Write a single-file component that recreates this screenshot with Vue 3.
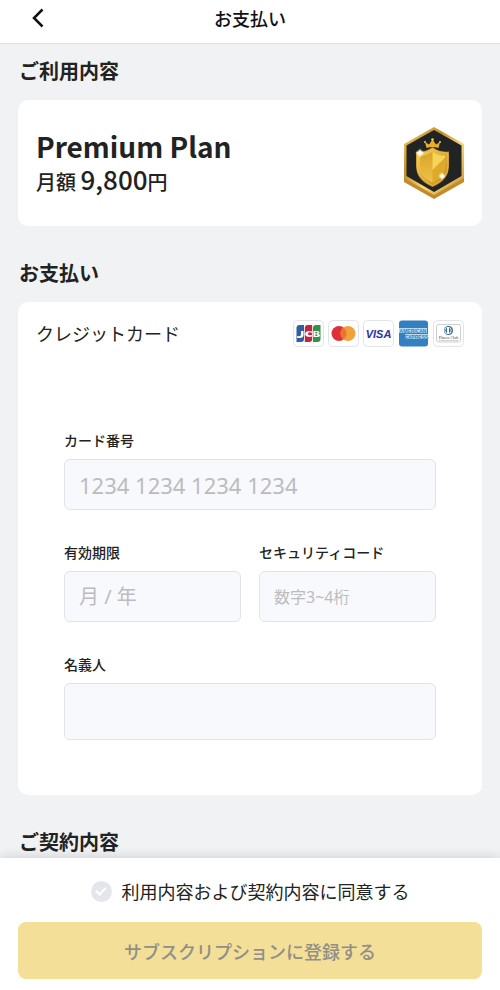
<script setup>
import {ref} from "vue";

const number = ref('')
const expiry = ref('')
const code = ref('')
const holder = ref('')
const agreed = ref(false)
</script>

<template>
    <div class="page">
        <header class="topbar">
            <button class="back" type="button" aria-label="戻る">
                <svg width="12" height="20" viewBox="0 0 12 20">
                    <path d="M10.5 1.5 2 10l8.500 8.500" fill="none" stroke="currentColor" stroke-width="2.500"/>
                </svg>
            </button>
            <h1>お支払い</h1>
        </header>

        <main class="content">
            <section>
                <h2>ご利用内容</h2>
                <div class="card plan">
                    <div>
                        <p class="plan-name">Premium Plan</p>
                        <p class="plan-price">月額 <span>9,800</span>円</p>
                    </div>
                    <svg class="badge" width="60" height="72" viewBox="0 0 60 72" aria-hidden="true">
                        <defs>
                            <linearGradient id="gold" x1="0" y1="0" x2="1" y2="1">
                                <stop offset="0" stop-color="#f0cf6a"/>
                                <stop offset=".35" stop-color="#c48d28"/>
                                <stop offset=".6" stop-color="#f3d77a"/>
                                <stop offset="1" stop-color="#c98f28"/>
                            </linearGradient>
                            <linearGradient id="shield" x1="0" y1="0" x2="1" y2="1">
                                <stop offset="0" stop-color="#f6d458"/>
                                <stop offset="1" stop-color="#c48a1e"/>
                            </linearGradient>
                            <linearGradient id="face" x1="0" y1="0" x2="0" y2="1">
                                <stop offset="0" stop-color="#d9a42d"/>
                                <stop offset="1" stop-color="#edc344"/>
                            </linearGradient>
                            <radialGradient id="spark">
                                <stop offset="0" stop-color="#fff"/>
                                <stop offset=".4" stop-color="#fff6cf"/>
                                <stop offset="1" stop-color="#fff6cf" stop-opacity="0"/>
                            </radialGradient>
                        </defs>
                        <path d="M0 49h60v6L30 72 0 55Z" fill="#c38a28"/>
                        <path d="M30 0 60 17v34L30 68 0 51V17Z" fill="url(#gold)"/>
                        <path d="M30 3 57.500 18.500v30.500L30 65 2.500 49V18.500Z" fill="#222323"/>
                        <path d="m22.500 21-1.500-6 4 2.500 3.500-5 3.500 5 4-2.500-1.500 6q-6-2-12 0Z" fill="#e6ae2d"/>
                        <g fill="#f5ce56">
                            <circle cx="21" cy="15" r="1"/>
                            <circle cx="28.500" cy="12.500" r="1.300"/>
                            <circle cx="36" cy="15" r="1"/>
                        </g>
                        <path d="M28.500 20q7 5.500 16.500 4.500V39q0 14-16.500 21Q12 53 12 39V24.500q9.500 1 16.500-4.500Z" fill="#c18a20"/>
                        <path d="M28.500 21.500q7 5 15.500 4.500v13q0 13-15.500 19.500Q13 52 13 39V26q8.500.5 15.500-4.500Z" fill="url(#shield)" stroke="#f0cb5c" stroke-width=".7"/>
                        <path d="M28.500 25q6 3.800 12.500 3.700V39q0 11-12.500 16.500Q16 50 16 39V28.700Q22.500 28.800 28.500 25Z" fill="url(#face)"/>
                        <path d="M28.500 25q6 3.800 12.500 3.700V31L28.500 43Z" fill="#f6d458"/>
                        <path d="M28.500 43 41 31v8q0 11-12.500 16.500Z" fill="#dfa92c"/>
                        <circle cx="16" cy="26" r="4" fill="url(#spark)"/>
                        <path d="m16 21 .7 4.300 4.300.7-4.300.7L16 31l-.7-4.300L11 26l4.300-.7Z" fill="#fff"/>
                        <circle cx="38" cy="49" r="3.500" fill="url(#spark)"/>
                        <path d="m38 45 .6 3.400L42 49l-3.400.6L38 53l-.6-3.400L34 49l3.400-.6Z" fill="#fff"/>
                    </svg>
                </div>
            </section>

            <section>
                <h2>お支払い</h2>
                <div class="card">
                    <div class="method">
                        <h3>クレジットカード</h3>
                        <div class="brands">
                            <svg viewBox="0 0 31 27" role="img" aria-label="JCB">
                                <rect class="frame" x=".5" y=".5" width="30" height="26" rx="4"/>
                                <path d="M3.500 8q0-3 3-3H11v14q0 3-3 3H3.500Z" fill="#2f609f"/>
                                <path d="M11.800 8q0-3 3-3h4.400v14q0 3-3 3h-4.400Z" fill="#c1273f"/>
                                <path d="M20 8q0-3 3-3h4.500v14q0 3-3 3H20Z" fill="#32924b"/>
                                <path d="M4 16q3 1 4-1v-4h2.500v4q0 3-4 3-2 0-2.500-.5ZM19 11.500q-5-1.500-6.500 1-1 3 1.500 4 2 .8 5 0v-1.500q-4 1-4-1.300t4-1ZM20.500 11h4q2 0 2 1.500 0 1.200-1.500 1.500 2 .2 2 1.600 0 1.400-2 1.400h-4.500Zm1.800 1v1.500h2V12Zm0 2.500V16h2v-1.500Z" fill="#fff"/>
                            </svg>
                            <svg viewBox="0 0 31 27" role="img" aria-label="Mastercard">
                                <rect class="frame" x=".5" y=".5" width="30" height="26" rx="4"/>
                                <circle cx="11" cy="13.500" r="7.500" fill="#dd3038"/>
                                <circle cx="20" cy="13.500" r="7.500" fill="#f0a03d"/>
                                <path d="M15.500 7.500a7.500 7.500 0 0 1 0 12 7.500 7.500 0 0 1 0-12Z" fill="#ed742f"/>
                            </svg>
                            <svg viewBox="0 0 31 27" role="img" aria-label="VISA">
                                <rect class="frame" x=".5" y=".5" width="30" height="26" rx="4"/>
                                <text class="visa" x="15.500" y="17.500">VISA</text>
                            </svg>
                            <svg viewBox="0 0 31 27" role="img" aria-label="American Express">
                                <rect x="1" y=".5" width="29" height="26" rx="3" fill="#3380c0"/>
                                <rect x="1" y="8" width="28" height="5" fill="#b9dbf2"/>
                                <rect x="7" y="14" width="23" height="5" fill="#b9dbf2"/>
                                <text class="amex" x="15" y="12.500">AMERICAN</text>
                                <text class="amex" x="18.500" y="18.500">EXPRESS</text>
                            </svg>
                            <svg viewBox="0 0 31 27" role="img" aria-label="Diners Club">
                                <rect class="frame" x=".5" y=".5" width="30" height="26" rx="4"/>
                                <rect x="3.500" y="4.500" width="24" height="17.500" rx="2" fill="#fff" stroke="#bfc3cc" stroke-width=".8"/>
                                <circle cx="15.500" cy="10.500" r="4.500" fill="#2d6793"/>
                                <circle cx="15" cy="10.500" r="3.500" fill="#fff"/>
                                <path d="M14 7.800a3 3 0 0 0 0 5.400ZM16 7.800a3 3 0 0 1 0 5.400Z" fill="#2d6793"/>
                                <text class="diners" x="15.500" y="19">Diners Club</text>
                                <path d="M6 20.500h19" stroke="#9aa2ae" stroke-width=".7" stroke-dasharray="1 .4"/>
                            </svg>
                        </div>
                    </div>

                    <form class="fields">
                        <div class="field wide">
                            <label for="number">カード番号</label>
                            <input id="number" v-model="number" class="large" type="text" inputmode="numeric" placeholder="1234 1234 1234 1234">
                        </div>
                        <div class="field">
                            <label for="expiry">有効期限</label>
                            <input id="expiry" v-model="expiry" class="medium" type="text" placeholder="月 / 年">
                        </div>
                        <div class="field">
                            <label for="code">セキュリティコード</label>
                            <input id="code" v-model="code" type="text" inputmode="numeric" placeholder="数字3~4桁">
                        </div>
                        <div class="field wide">
                            <label for="holder">名義人</label>
                            <input id="holder" v-model="holder" class="tall" type="text">
                        </div>
                    </form>
                </div>
            </section>

            <section>
                <h2>ご契約内容</h2>
            </section>
        </main>

        <footer class="bottom">
            <label class="agree">
                <input v-model="agreed" type="checkbox">
                <span>利用内容および契約内容に同意する</span>
            </label>
            <button class="submit" type="button" :disabled="!agreed">サブスクリプションに登録する</button>
        </footer>
    </div>
</template>

<style>
body {
    margin: 0;
    background: #f1f2f4;
}
</style>

<style scoped>
* {
    box-sizing: border-box;
}

.page {
    display: flex;
    flex-direction: column;
    height: 100vh;
    color: #222;
    font-family: "Noto Sans CJK JP", sans-serif;
}

h1, h2, h3, p {
    margin: 0;
}

button, input {
    font-family: inherit;
}

.topbar {
    display: grid;
    grid-template-columns: 40px 1fr 40px;
    align-items: center;
    flex: none;
    height: 44px;
    padding: 0 18px 8px;
    background: #fff;
    border-bottom: 1px solid #dcdee0;
}

.back {
    display: flex;
    justify-content: center;
    padding: 0;
    border: 0;
    background: none;
    color: #111;
}

h1 {
    text-align: center;
    font-size: 18px;
    line-height: 28px;
    font-weight: 500;
    color: #111;
}

.content {
    flex: 1;
    min-height: 0;
    padding: 12px 18px 0;
    overflow-y: auto;
}

section + section {
    margin-top: 32px;
}

h2 {
    margin-bottom: 14px;
    padding: 0 1px;
    font-size: 20px;
    line-height: 30px;
    font-weight: 700;
}

.card {
    padding: 18px;
    border-radius: 10px;
    background: #fff;
}

.plan {
    display: flex;
    align-items: center;
    justify-content: space-between;
    padding: 27px 18px;
}

.plan-name {
    font-size: 28px;
    line-height: 34px;
    font-weight: 700;
}

.plan-price {
    font-size: 20px;
    line-height: 32px;
    font-weight: 500;
}

.plan-price span {
    font-size: 26px;
}

.badge {
    flex: none;
}

.method {
    display: flex;
    align-items: center;
    justify-content: space-between;
}

h3 {
    font-size: 18px;
    line-height: 27px;
    font-weight: 400;
}

.brands {
    display: flex;
    gap: 4px;
}

.brands svg {
    width: 31px;
    height: 27px;
}

.frame {
    fill: #fff;
    stroke: #e2e4ed;
}

.visa {
    font: italic 700 11px "Liberation Sans", sans-serif;
    text-anchor: middle;
    fill: #2a31a5;
}

.amex {
    font: 700 5px "Liberation Sans", sans-serif;
    text-anchor: middle;
    fill: #3380c0;
}

.diners {
    font: 4px "Liberation Serif", serif;
    text-anchor: middle;
    fill: #3c4250;
}

.fields {
    display: grid;
    grid-template-columns: 1fr 1fr;
    gap: 32px 18px;
    padding: 83px 28px 37px;
}

.field {
    display: flex;
    flex-direction: column;
    gap: 9px;
    min-width: 0;
}

.wide {
    grid-column: 1 / -1;
}

.field label {
    font-size: 14px;
    line-height: 20px;
    font-weight: 500;
}

.field input {
    width: 100%;
    height: 51px;
    padding: 0 14px;
    border: 1px solid #e2e3ea;
    border-radius: 6px;
    background: #f8f9fc;
    color: #222;
    font-family: "Noto Sans", "Noto Sans CJK JP", sans-serif;
    font-size: 16px;
}

.field input::placeholder {
    color: #bcbcbf;
    opacity: 1;
}

.field .medium {
    font-size: 20px;
}

.field .large {
    font-size: 22px;
}

.field .tall {
    height: 57px;
}

.bottom {
    position: relative;
    display: flex;
    flex-direction: column;
    gap: 17px;
    flex: none;
    padding: 19px 18px 11px;
    background: #fff;
    box-shadow: 0 0 12px rgba(0, 0, 0, .16);
}

.agree {
    display: flex;
    align-items: center;
    justify-content: center;
    gap: 10px;
    font-size: 18px;
    line-height: 28px;
}

.agree input {
    display: grid;
    place-items: center;
    appearance: none;
    width: 21px;
    height: 21px;
    margin: 0;
    border-radius: 50%;
    background: #e4e6eb;
}

.agree input::after {
    content: '';
    box-sizing: border-box;
    width: 10px;
    height: 6px;
    border-left: 2px solid #fff;
    border-bottom: 2px solid #fff;
    transform: translateY(-1px) rotate(-45deg);
}

.agree input:checked {
    background: #e3b93a;
}

.submit {
    height: 57px;
    border: 0;
    border-radius: 8px;
    background: #e9bf35;
    color: #222;
    font-size: 18px;
    font-weight: 500;
}

.submit:disabled {
    background: #f3df98;
    color: #918f87;
}
</style>
